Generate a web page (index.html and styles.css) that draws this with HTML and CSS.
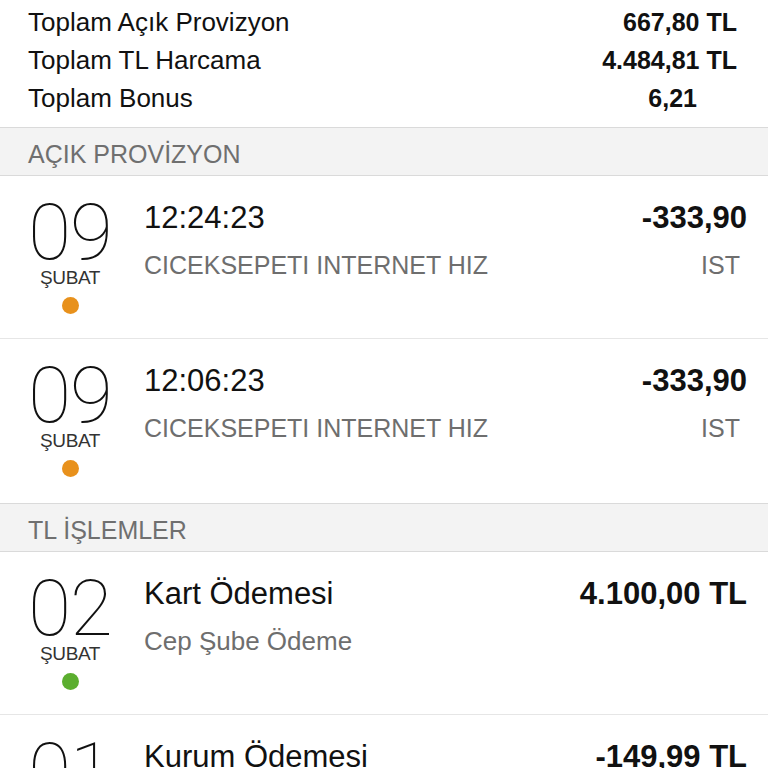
FILE: index.html
```html
<!DOCTYPE html>
<html lang="tr">
<head>
  <meta charset="UTF-8" />
  <meta name="viewport" content="width=device-width, initial-scale=1.0" />
  <title>Kart Hareketleri</title>
  <link rel="stylesheet" href="styles.css">
</head>
<body>
  <main>
    <!-- Totals -->
    <section class="summary">
      <div class="summary-row">
        <span>Toplam Açık Provizyon</span>
        <span class="summary-value">667,80 TL</span>
      </div>
      <div class="summary-row">
        <span>Toplam TL Harcama</span>
        <span class="summary-value">4.484,81 TL</span>
      </div>
      <div class="summary-row">
        <span>Toplam Bonus</span>
        <span class="summary-value no-unit">6,21</span>
      </div>
    </section>

    <h2 class="section-title">AÇIK PROVİZYON</h2>
    <ul class="tx-list">
      <li class="tx">
        <div class="tx-date">
          <span class="day">09</span>
          <span class="month">ŞUBAT</span>
          <span class="dot pending"></span>
        </div>
        <div class="tx-body">
          <div class="tx-line">
            <span class="tx-title">12:24:23</span>
            <span class="tx-amount">-333,90</span>
          </div>
          <div class="tx-line sub">
            <span>CICEKSEPETI INTERNET HIZ</span>
            <span class="tx-city">IST</span>
          </div>
        </div>
      </li>
      <li class="tx">
        <div class="tx-date">
          <span class="day">09</span>
          <span class="month">ŞUBAT</span>
          <span class="dot pending"></span>
        </div>
        <div class="tx-body">
          <div class="tx-line">
            <span class="tx-title">12:06:23</span>
            <span class="tx-amount">-333,90</span>
          </div>
          <div class="tx-line sub">
            <span>CICEKSEPETI INTERNET HIZ</span>
            <span class="tx-city">IST</span>
          </div>
        </div>
      </li>
    </ul>

    <h2 class="section-title">TL İŞLEMLER</h2>
    <ul class="tx-list">
      <li class="tx">
        <div class="tx-date">
          <span class="day">02</span>
          <span class="month">ŞUBAT</span>
          <span class="dot done"></span>
        </div>
        <div class="tx-body">
          <div class="tx-line">
            <span class="tx-title">Kart Ödemesi</span>
            <span class="tx-amount">4.100,00 TL</span>
          </div>
          <div class="tx-line sub">
            <span>Cep Şube Ödeme</span>
          </div>
        </div>
      </li>
      <li class="tx">
        <div class="tx-date">
          <span class="day">01</span>
          <span class="month">ŞUBAT</span>
          <span class="dot done"></span>
        </div>
        <div class="tx-body">
          <div class="tx-line">
            <span class="tx-title">Kurum Ödemesi</span>
            <span class="tx-amount">-149,99 TL</span>
          </div>
          <div class="tx-line sub">
            <span>Cep Şube Ödeme</span>
          </div>
        </div>
      </li>
    </ul>
  </main>
</body>
</html>
```

FILE: styles.css
```css
/* Reset and base styles */
* {
  box-sizing: border-box;
  margin: 0;
  padding: 0;
}
html, body {
  height: 100%;
  overflow: hidden;
}
body {
  font-family: "Liberation Sans", Arial, sans-serif;
  background-color: #fff;
  color: #111;
}

/* Totals block */
.summary {
  padding: 3px 31px 10px 28px;
}
.summary-row {
  display: flex;
  justify-content: space-between;
  font-size: 26px;
  line-height: 38px;
}
.summary-value {
  font-size: 25px;
  font-weight: bold;
}
.summary-value.no-unit {
  padding-right: 40px;
}

/* Section headers */
.section-title {
  background-color: #f3f3f3;
  border-top: 1px solid #dadada;
  border-bottom: 1px solid #dadada;
  color: #6f6f6f;
  font-size: 25px;
  font-weight: normal;
  line-height: 42px;
  padding: 5px 0 0 28px;
}
.tx-list + .section-title {
  margin-top: 1px;
}

/* Transaction rows */
.tx-list {
  list-style: none;
}
.tx {
  display: flex;
  height: 163px;
  border-bottom: 1px solid #e6e6e6;
  padding: 26px 21px 0 28px;
}
.tx:last-child {
  border-bottom: none;
}
.tx-date {
  width: 84px;
  display: flex;
  flex-direction: column;
  align-items: center;
}
.day {
  font-family: Roboto, Inter, sans-serif;
  font-weight: 100;
  font-size: 78px;
  line-height: 62px;
  letter-spacing: -1px;
  color: #111;
}
.month {
  font-size: 19px;
  line-height: 22px;
  letter-spacing: -0.4px;
  margin-top: 3px;
  color: #333;
}
.dot {
  width: 17px;
  height: 17px;
  border-radius: 50%;
  margin-top: 8px;
}
.dot.pending {
  background-color: #e8911c;
}
.dot.done {
  background-color: #5bae2f;
}

.tx-body {
  flex: 1;
  margin-left: 32px;
  margin-top: -2px;
}
.tx-line {
  display: flex;
  justify-content: space-between;
  font-size: 31px;
  line-height: 36px;
}
.tx-amount {
  font-weight: bold;
}
.tx-line.sub {
  font-size: 25px;
  line-height: 30px;
  color: #6e6e6e;
  margin-top: 14px;
}
.tx-line.sub span:first-child:last-child {
  font-size: 26px;
}
.tx-city {
  margin-right: 7px;
}
```
